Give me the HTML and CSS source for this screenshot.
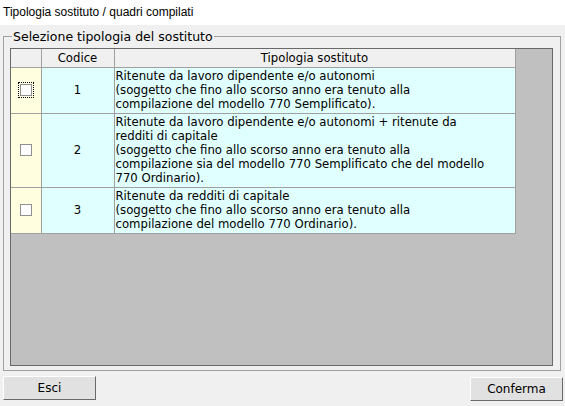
FILE: index.html
```html
<!DOCTYPE html>
<html lang="it">
<head>
  <meta charset="UTF-8">
  <title>Tipologia sostituto / quadri compilati</title>
  <link rel="stylesheet" href="styles.css">
</head>
<body>
  <div class="titlebar">Tipologia sostituto / quadri compilati</div>

  <fieldset class="frame">
    <legend>Selezione tipologia del sostituto</legend>
    <div class="grid">
      <table>
        <colgroup>
          <col class="col-check">
          <col class="col-code">
          <col class="col-desc">
        </colgroup>
        <thead>
          <tr>
            <th></th>
            <th>Codice</th>
            <th>Tipologia sostituto</th>
          </tr>
        </thead>
        <tbody>
          <tr>
            <td class="check"><input type="checkbox" class="focused"></td>
            <td class="code">1</td>
            <td class="desc">Ritenute da lavoro dipendente e/o autonomi<br>(soggetto che fino allo scorso anno era tenuto alla<br>compilazione del modello 770 Semplificato).</td>
          </tr>
          <tr>
            <td class="check"><input type="checkbox"></td>
            <td class="code">2</td>
            <td class="desc">Ritenute da lavoro dipendente e/o autonomi + ritenute da<br>redditi di capitale<br>(soggetto che fino allo scorso anno era tenuto alla<br>compilazione sia del modello 770 Semplificato che del modello<br>770 Ordinario).</td>
          </tr>
          <tr>
            <td class="check"><input type="checkbox"></td>
            <td class="code">3</td>
            <td class="desc">Ritenute da redditi di capitale<br>(soggetto che fino allo scorso anno era tenuto alla<br>compilazione del modello 770 Ordinario).</td>
          </tr>
        </tbody>
      </table>
    </div>
  </fieldset>

  <div class="buttons">
    <button type="button" class="btn">Esci</button>
    <button type="button" class="btn btn-right">Conferma</button>
  </div>
</body>
</html>
```

FILE: styles.css
```css
html, body {
  margin: 0;
  padding: 0;
}
body {
  background-color: #f0f0f0;
  font-family: 'DejaVu Sans', Verdana, sans-serif;
  color: #000;
  width: 565px;
  height: 406px;
  overflow: hidden;
}
.titlebar {
  background-color: #fff;
  height: 25px;
  line-height: 25px;
  padding-left: 3px;
  font-family: 'Liberation Sans', Arial, sans-serif;
  font-size: 12px;
}
.frame {
  margin: 4px 0 0 3px;
  width: 558px;
  box-sizing: border-box;
  border: 1px solid #a0a0a0;
  padding: 4px 7px 4px 6px;
  min-width: 0;
}
.frame legend {
  font-size: 12.5px;
  line-height: 15px;
  padding: 0 1px;
  margin-left: 2px;
}
.grid {
  height: 318px;
  box-sizing: border-box;
  border: 1px solid #696969;
  background-color: #c0c0c0;
}
table {
  border-collapse: collapse;
  table-layout: fixed;
  width: 504px;
  font-size: 11.7px;
}
.col-check { width: 30px; }
.col-code { width: 73px; }
.col-desc { width: 401px; }
th, td {
  border-right: 1px solid #a0a0a0;
  border-bottom: 1px solid #a0a0a0;
  padding: 0;
  line-height: 14px;
}
th {
  background-color: #f0f0f0;
  font-weight: normal;
  padding: 2px 0;
}
td {
  background-color: #e0ffff;
  padding: 1px 0 2px;
}
td.check {
  background-color: #ffffe0;
  text-align: center;
}
td.code {
  text-align: center;
}
td.desc {
  padding-left: 1px;
  white-space: nowrap;
}
.check input {
  appearance: none;
  -webkit-appearance: none;
  display: block;
  margin: 0 auto 0 9px;
  width: 12px;
  height: 12px;
  box-sizing: border-box;
  border: 1px solid #8f8f8f;
  background-color: #fff;
}
.check input.focused {
  outline: 1px dotted #000;
  outline-offset: 1px;
}
.buttons {
  display: flex;
  justify-content: space-between;
  margin: 5px 2px 0 3px;
}
.btn {
  width: 93px;
  height: 24px;
  box-sizing: border-box;
  background-color: #e1e1e1;
  border: 1px solid;
  border-color: #fff #696969 #696969 #fff;
  font-family: 'DejaVu Sans', Verdana, sans-serif;
  font-size: 12px;
  color: #000;
  padding: 0;
}
.btn-right {
  margin-top: 1px;
}
```
